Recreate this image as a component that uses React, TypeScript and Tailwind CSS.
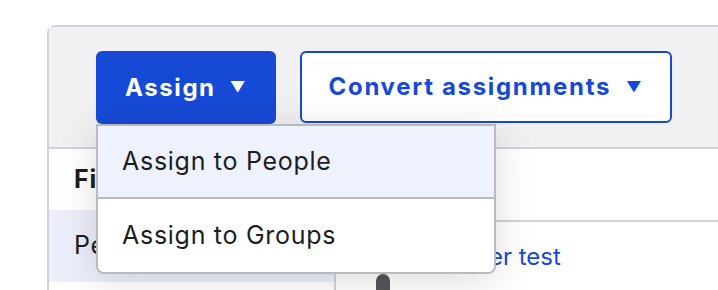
import { useState } from 'react'

const menuItems = ['Assign to People', 'Assign to Groups']

export default function App() {
  const [open] = useState(true)

  return (
    <div className="relative w-[718px] h-[290px] overflow-hidden bg-white font-['Inter',sans-serif] text-[#1d1d21] tracking-[0.045em]">
      <div className="absolute left-[47px] top-[25px] w-[700px] h-[300px] border-2 border-[#d2d2d6] rounded-tl-[8px] bg-white">
        {/* Toolbar */}
        <div className="flex items-start gap-6 h-[122px] pl-[47px] pt-[24px] bg-[#f1f1f4] border-b-2 border-[#d2d2d6]">
          <button className="flex items-center gap-[14px] h-[73px] w-[180px] justify-center rounded-[6px] bg-[#1649d6] text-white text-[24px] font-bold tracking-[0.065em]">
            Assign <span className="text-[15px]">▼</span>
          </button>
          <button className="flex items-center gap-[15px] h-[72px] w-[372px] justify-center rounded-[6px] border-2 border-[#1649d6] bg-white text-[#1649d6] text-[24px] font-bold tracking-[0.07em]">
            Convert assignments <span className="text-[15px]">▼</span>
          </button>
        </div>

        {/* Table */}
        <div className="flex">
          <div className="w-[287px] border-r-2 border-[#d2d2d6]">
            <div className="h-[61px] flex items-center pl-[25px] text-[25px] font-bold">Filters</div>
            <div className="h-[72px] flex items-center pl-[25px] text-[25px] bg-[#eceef9]">People</div>
          </div>
          <div className="flex-1">
            <div className="h-[73px] border-b-2 border-[#d2d2d6]"></div>
            <div className="pl-[40px] pt-[20px]">
              <div className="text-[24px] text-[#1649d6] leading-[30px] tracking-normal">Jane Parker test</div>
              <div className="mt-[2px] w-[14px] h-[20px] rounded-t-full bg-[#55555c]"></div>
            </div>
          </div>
        </div>
      </div>

      {open && (
        <div className="absolute left-[96px] top-[124px] w-[400px] bg-white border-2 border-[#b9b9be] rounded-b-[8px] shadow-[0_6px_40px_rgba(0,0,0,0.14)] overflow-hidden">
          {menuItems.map((item, i) => (
            <div
              key={item}
              className={`h-[73px] flex items-center pl-[24px] text-[25px] ${i === 0 ? 'bg-[#eef2fd] border-b-2 border-[#b9b9be]' : 'bg-white'}`}
            >
              {item}
            </div>
          ))}
        </div>
      )}
    </div>
  )
}
